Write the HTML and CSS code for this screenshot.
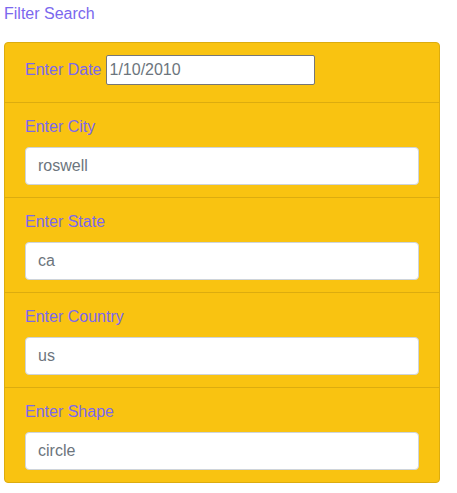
FILE: index.html
```html
<!DOCTYPE html>
<html>
<head>
<meta charset="utf-8">
<link rel="stylesheet" href="styles.css">
</head>
<body>
<div class="title">Filter Search</div>
<ul class="list">
  <li class="item item-date">
    <label class="label-inline">Enter Date</label>
    <input class="date-input" type="text" value="1/10/2010">
  </li>
  <li class="item">
    <label class="label">Enter City</label>
    <input class="field" type="text" value="roswell">
  </li>
  <li class="item">
    <label class="label">Enter State</label>
    <input class="field" type="text" value="ca">
  </li>
  <li class="item">
    <label class="label">Enter Country</label>
    <input class="field" type="text" value="us">
  </li>
  <li class="item">
    <label class="label">Enter Shape</label>
    <input class="field" type="text" value="circle">
  </li>
</ul>
</body>
</html>
```
FILE: styles.css
```css
* { box-sizing: border-box; }
body {
  margin: 0;
  padding: 0 4px;
  font-family: "Liberation Sans", Arial, sans-serif;
  font-size: 16px;
  line-height: 24px;
  background: #fff;
}
.title {
  color: #7b68ee;
  padding-top: 2px;
  height: 42px;
}
.list {
  list-style: none;
  margin: 0;
  padding: 0;
  width: 436px;
  background: #f9c311;
  border: 1px solid #dcac0f;
  border-radius: 4px;
}
.item {
  padding: 12px 20px;
  border-top: 1px solid #dcac0f;
}
.item:first-child { border-top: 0; }
.item-date {
  display: flex;
  align-items: baseline;
  height: 59px;
  padding-top: 12px;
}
.label-inline {
  color: #7b68ee;
  margin-right: 5px;
}
.date-input {
  width: 209px;
  height: 30px;
  border: 1px solid #767676;
  border-radius: 2px;
  background: #fff;
  font: inherit;
  color: #6c757d;
  padding: 1px 2px;
  margin: 0;
}
.label {
  display: block;
  color: #7b68ee;
  margin-bottom: 8px;
}
.field {
  display: block;
  width: 100%;
  height: 38px;
  padding: 6px 12px;
  font: inherit;
  color: #6c757d;
  background: #fff;
  border: 1px solid #ced4da;
  border-radius: 4px;
  margin: 0;
}
```
